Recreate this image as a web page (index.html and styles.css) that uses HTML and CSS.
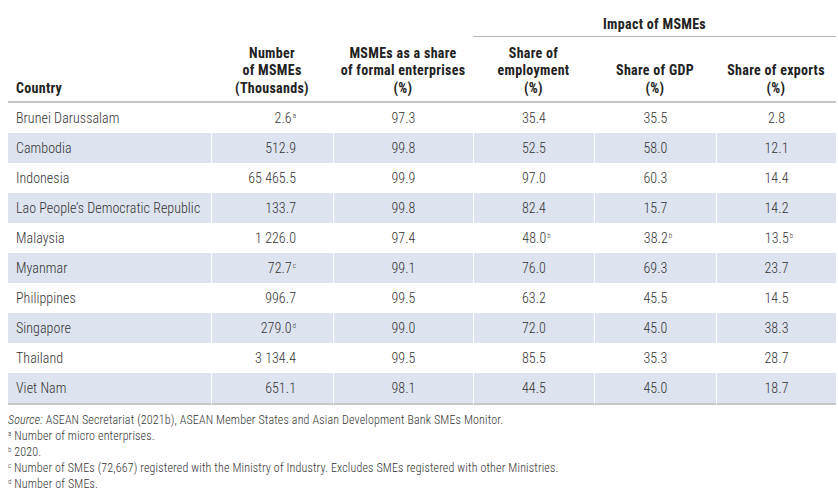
FILE: index.html
```html
<!DOCTYPE html>
<html lang="en">
<head>
<meta charset="utf-8">
<title>MSMEs in ASEAN</title>
<link rel="stylesheet" href="styles.css">
</head>
<body>
<div class="page">
  <table class="data">
    <colgroup>
      <col class="c-country"><col class="c-num"><col class="c-share"><col class="c-emp"><col class="c-gdp"><col class="c-exp">
    </colgroup>
    <thead>
      <tr class="group-row">
        <th></th><th></th><th></th>
        <th colspan="3" class="group">Impact of MSMEs</th>
      </tr>
      <tr class="head-row">
        <th class="left">Country</th>
        <th>Number<br>of MSMEs<br>(Thousands)</th>
        <th>MSMEs as a share<br>of formal enterprises<br>(%)</th>
        <th>Share of<br>employment<br>(%)</th>
        <th>Share of GDP<br>(%)</th>
        <th>Share of exports<br>(%)</th>
      </tr>
    </thead>
    <tbody>
      <tr><td class="left">Brunei Darussalam</td><td class="num">2.6<sup>a</sup></td><td>97.3</td><td>35.4</td><td>35.5</td><td>2.8</td></tr>
      <tr class="alt"><td class="left">Cambodia</td><td class="num">512.9</td><td>99.8</td><td>52.5</td><td>58.0</td><td>12.1</td></tr>
      <tr><td class="left">Indonesia</td><td class="num">65 465.5</td><td>99.9</td><td>97.0</td><td>60.3</td><td>14.4</td></tr>
      <tr class="alt"><td class="left">Lao People’s Democratic Republic</td><td class="num">133.7</td><td>99.8</td><td>82.4</td><td>15.7</td><td>14.2</td></tr>
      <tr><td class="left">Malaysia</td><td class="num">1 226.0</td><td>97.4</td><td>48.0<sup class="hang">b</sup></td><td>38.2<sup class="hang">b</sup></td><td>13.5<sup class="hang">b</sup></td></tr>
      <tr class="alt"><td class="left">Myanmar</td><td class="num">72.7<sup>c</sup></td><td>99.1</td><td>76.0</td><td>69.3</td><td>23.7</td></tr>
      <tr><td class="left">Philippines</td><td class="num">996.7</td><td>99.5</td><td>63.2</td><td>45.5</td><td>14.5</td></tr>
      <tr class="alt"><td class="left">Singapore</td><td class="num">279.0<sup>d</sup></td><td>99.0</td><td>72.0</td><td>45.0</td><td>38.3</td></tr>
      <tr><td class="left">Thailand</td><td class="num">3 134.4</td><td>99.5</td><td>85.5</td><td>35.3</td><td>28.7</td></tr>
      <tr class="alt"><td class="left">Viet Nam</td><td class="num">651.1</td><td>98.1</td><td>44.5</td><td>45.0</td><td>18.7</td></tr>
    </tbody>
  </table>
  <div class="notes">
    <p><em>Source:</em> ASEAN Secretariat (2021b), ASEAN Member States and Asian Development Bank SMEs Monitor.</p>
    <p><sup>a</sup> Number of micro enterprises.</p>
    <p><sup>b</sup> 2020.</p>
    <p><sup>c</sup> Number of SMEs (72,667) registered with the Ministry of Industry. Excludes SMEs registered with other Ministries.</p>
    <p><sup>d</sup> Number of SMEs.</p>
  </div>
</div>
</body>
</html>
```
FILE: styles.css
```css
html, body {
  margin: 0;
  padding: 0;
  background: #ffffff;
}
body {
  font-family: "Roboto Condensed", "Liberation Sans", sans-serif;
  color: #333333;
}
.page {
  padding: 0 2px 0 8px;
}
.data {
  width: 828px;
  border-collapse: separate;
  border-spacing: 0;
  table-layout: fixed;
}
.c-country { width: 203px; }
.c-num { width: 122px; }
.c-share { width: 140px; }
.c-emp { width: 121px; }
.c-gdp { width: 122px; }
.c-exp { width: 120px; }

th {
  font-weight: 700;
  font-size: 14px;
  color: #222;
  text-align: center;
  letter-spacing: 0.3px;
}
.group-row th {
  padding: 16px 0 4px;
  line-height: 16px;
  vertical-align: middle;
}
.group-row th.group {
  border-bottom: 1px solid #b5b5b5;
}
.head-row th {
  height: 60px;
  line-height: 17.5px;
  vertical-align: bottom;
  padding: 0 0 4px;
  border-bottom: 2px solid #c6c6c6;
}
th.left, td.left {
  text-align: left;
  padding-left: 8px;
}
td {
  height: 30px;
  padding: 0;
  font-size: 14px;
  font-weight: 300;
  letter-spacing: 0.05px;
  text-align: center;
  vertical-align: middle;
  border-left: 1px solid #ffffff;
  white-space: nowrap;
}
td.left { border-left: none; }
td.num {
  text-align: right;
  padding-right: 37px;
}
tr.alt td { background: #dde3ef; }
tbody tr:last-child td { border-bottom: 2px solid #c6c6c6; }

sup {
  font-size: 7px;
  line-height: 0;
  vertical-align: 5px;
  letter-spacing: 0;
  margin-left: 1px;
}
sup.hang { margin-right: -5px; }

.notes {
  padding-top: 7px;
  font-size: 12px;
  font-weight: 300;
  letter-spacing: 0.15px;
  color: #333333;
}
.notes p {
  margin: 0;
  line-height: 16px;
}
.notes sup {
  font-size: 7px;
  vertical-align: 4px;
  margin: 0;
}
```
